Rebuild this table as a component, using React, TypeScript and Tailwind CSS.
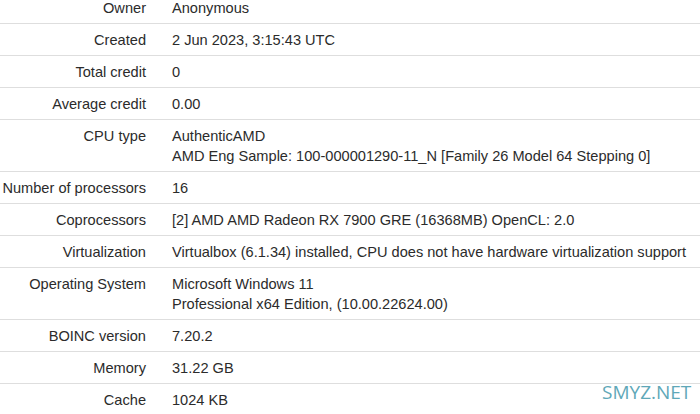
const rows: { label: string; value: string[] }[] = [
  { label: "Owner", value: ["Anonymous"] },
  { label: "Created", value: ["2 Jun 2023, 3:15:43 UTC"] },
  { label: "Total credit", value: ["0"] },
  { label: "Average credit", value: ["0.00"] },
  {
    label: "CPU type",
    value: [
      "AuthenticAMD",
      "AMD Eng Sample: 100-000001290-11_N [Family 26 Model 64 Stepping 0]",
    ],
  },
  { label: "Number of processors", value: ["16"] },
  {
    label: "Coprocessors",
    value: ["[2] AMD AMD Radeon RX 7900 GRE (16368MB) OpenCL: 2.0"],
  },
  {
    label: "Virtualization",
    value: [
      "Virtualbox (6.1.34) installed, CPU does not have hardware virtualization support",
    ],
  },
  {
    label: "Operating System",
    value: ["Microsoft Windows 11", "Professional x64 Edition, (10.00.22624.00)"],
  },
  { label: "BOINC version", value: ["7.20.2"] },
  { label: "Memory", value: ["31.22 GB"] },
  { label: "Cache", value: ["1024 KB"] },
];

export default function App() {
  return (
    <div
      className="relative h-[414px] w-[700px] overflow-hidden bg-white text-[14.6px] leading-[20px] text-[#2b2b2b]"
      style={{ fontFamily: '"Liberation Sans", Arial, sans-serif' }}
    >
      {/* host details table */}
      <div className="-mt-2 flex flex-col">
        {rows.map((row) => (
          <div
            key={row.label}
            className="flex border-b border-[#dedede] pt-[6px] pb-[5px]"
          >
            <div className="w-[154px] shrink-0 pr-2 text-right whitespace-nowrap">
              {row.label}
            </div>
            <div className="pl-[18px] whitespace-nowrap">
              {row.value.map((line) => (
                <div key={line}>{line}</div>
              ))}
            </div>
          </div>
        ))}
      </div>

      {/* watermark */}
      <div
        className="absolute top-[380px] left-[602px] text-[19px] leading-[24px] text-[#5fa8b8]"
        style={{ fontFamily: '"Open Sans", "Noto Sans", sans-serif' }}
      >
        SMYZ.NET
      </div>
    </div>
  );
}
